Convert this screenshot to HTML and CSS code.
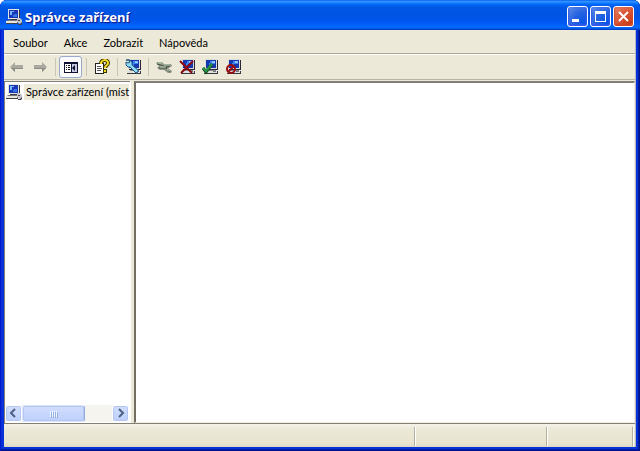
FILE: index.html
```
<!DOCTYPE html>
<html lang="cs">
<head>
<meta charset="utf-8">
<title>Správce zařízení</title>
<link rel="stylesheet" href="styles.css">
</head>
<body>
<svg class="defs" aria-hidden="true">
  <symbol id="computer" viewBox="0 0 16 16">
    <path d="M2 0h11v10H2z" fill="#e6e4de"/><path d="M13 1h1v10H4v-1h9z" fill="#383848"/>
    <path d="M3 1h9v8H3z" fill="#1838b8"/><path d="M4 2h4v1H6v3H4z" fill="#78b4ff"/><path d="M8 5h3v3H7V6h1z" fill="#3474e4"/>
    <path d="M2 11h9l1 1H1z" fill="#74747c"/><path d="M0 12h11v2H0z" fill="#e8e6de"/><path d="M0 14h12v1H0zM11 12h1v2h-1z" fill="#404048"/>
    <path d="M11 9h3l2 2v3l-2 1-3-2z" fill="#c4c6cc"/><path d="M12 15h2l2-2v2l-1 1h-3zM12 11h2v1h-2z" fill="#404050"/>
  </symbol>
  <symbol id="device" viewBox="0 0 16 16">
    <path d="M3 0h12v10H3z" fill="#dcdcd8"/><path d="M15 1h1v10H4v-1h11z" fill="#282838"/>
    <path d="M4 1h10v8H4z" fill="#1438b0"/><path d="M8 2h5v3H9v2H7V4h1z" fill="#3c84f0"/><path d="M10 2h3v2h-3z" fill="#8cc4ff"/>
    <path d="M5 11h9v1H5z" fill="#888"/><path d="M2 12h13v2H2z" fill="#e0e0dc"/><path d="M2 14h14v1H2zM15 12h1v2h-1z" fill="#383840"/><path d="M11 12h3v1h-3z" fill="#747480"/>
  </symbol>
</svg>
<div class="window">
  <header class="titlebar">
    <svg class="icon"><use href="#computer"/></svg>
    <h1>Správce zařízení</h1>
    <div class="captions">
      <button class="caption" aria-label="Minimalizovat"><svg viewBox="0 0 19 19"><path d="M4 12h7v3H4z" fill="#fff"/></svg></button>
      <button class="caption" aria-label="Maximalizovat"><svg viewBox="0 0 19 19"><path d="M4 4h11v11H4zM5 7v7h9V7z" fill="#fff" fill-rule="evenodd"/></svg></button>
      <button class="caption close" aria-label="Zavřít"><svg viewBox="0 0 19 19"><path d="M5 5l9 9M14 5l-9 9" stroke="#fff" stroke-width="2"/></svg></button>
    </div>
  </header>
  <main class="client">
    <nav class="menu"><button>Soubor</button><button>Akce</button><button>Zobrazit</button><button>Nápověda</button></nav>
    <div class="toolbar">
      <button class="tool" aria-label="Zpět"><svg class="icon" viewBox="0 0 16 16"><path d="M1 8l5-5v3h8v4H6v3z" fill="#aaa99f"/><path d="M6 9h8v1H6v3L2 9z" fill="#8e8d85"/></svg></button>
      <button class="tool" aria-label="Vpřed"><svg class="icon" viewBox="0 0 16 16"><path d="M15 8l-5-5v3H2v4h8v3z" fill="#aaa99f"/><path d="M2 9h12l-4 4v-3H2z" fill="#8e8d85"/></svg></button>
      <span class="divider"></span>
      <button class="tool pressed" aria-label="Strom konzoly"><svg class="icon" viewBox="0 0 16 16"><path d="M1 3h14v11H1z" fill="#101030"/><path d="M2 5h6v8H2z" fill="#fff"/><path d="M9 5h5v8H9z" fill="#c8c8e0"/><path d="M3 6h1v1H3zM5 6h2v1H5zM3 8h1v1H3zM5 8h2v1H5zM3 10h1v1H3zM5 10h2v1H5z" fill="#111"/><path d="M12 6v6L9 9z" fill="#101030"/></svg></button>
      <span class="divider"></span>
      <button class="tool" aria-label="Nápověda"><svg class="icon" viewBox="0 0 16 16"><path d="M1 4h9v11H1z" fill="#222"/><path d="M2 5h7v9H2z" fill="#fff"/><path d="M3 7h4v1H3zM3 9h5v1H3zM3 11h4v1H3z" fill="#555"/><path d="M7 5c0-5 7-5 7-1 0 3-3 2-3 5" fill="none" stroke="#3c3600" stroke-width="4"/><path d="M7 5c0-5 7-5 7-1 0 3-3 2-3 5" fill="none" stroke="#f6df20" stroke-width="2"/><path d="M9 10h4v4H9z" fill="#3c3600"/><path d="M10 11h2v2h-2z" fill="#f6df20"/></svg></button>
      <span class="divider"></span>
      <button class="tool" aria-label="Vyhledat změny hardwaru"><svg class="icon" viewBox="0 0 16 16"><use href="#device"/><path d="M1 1h3l1 2-2 1-2-1v3l2 2h2l6 6 2-1v-2L7 6V3L5 1z" fill="#8eddf4" stroke="#1e5080"/></svg></button>
      <span class="divider"></span>
      <button class="tool" aria-label="Aktualizovat ovladač"><svg class="icon" viewBox="0 0 16 16"><path d="M0 4l2-1h4l2 2h7l1 2-3 2h-1l4 3-1 2h-3l-4-3H4L1 9l2-2z" fill="#8c9484"/><path d="M1 5l4 1 1 1h8M3 9h7l4 4M9 9l4-2" fill="none" stroke="#424a42"/><path d="M2 4h4M8 6h6M4 8h6M11 10l3 2" stroke="#bcd2b4"/></svg></button>
      <button class="tool" aria-label="Odinstalovat"><svg class="icon" viewBox="0 0 16 16"><use href="#device"/><path d="M1 2l12 12M14 2L2 14" stroke="#8c0810" stroke-width="2"/></svg></button>
      <button class="tool" aria-label="Povolit"><svg class="icon" viewBox="0 0 16 16"><use href="#device"/><path d="M1 9l3 4 6-8" fill="none" stroke="#164c24" stroke-width="3"/><path d="M1 9l3 3 6-7" fill="none" stroke="#289444" stroke-width="2"/></svg></button>
      <button class="tool" aria-label="Zakázat"><svg class="icon" viewBox="0 0 16 16"><use href="#device"/><circle cx="6" cy="10" r="4" fill="none" stroke="#980c10" stroke-width="2"/><path d="M3 13l6-6" stroke="#980c10" stroke-width="2"/></svg></button>
    </div>
    <div class="panes">
      <section class="tree">
        <div class="node"><svg class="icon"><use href="#computer"/></svg><span class="label">Správce zařízení (míst</span></div>
        <div class="scrollbar">
          <button aria-label="Posunout vlevo"><svg viewBox="0 0 15 15"><path d="M9 3L5 7l4 4" fill="none" stroke="#4d6185" stroke-width="2"/></svg></button>
          <div class="track"><div class="thumb"><i></i><i></i><i></i><i></i></div></div>
          <button aria-label="Posunout vpravo"><svg viewBox="0 0 15 15"><path d="M6 3l4 4-4 4" fill="none" stroke="#4d6185" stroke-width="2"/></svg></button>
        </div>
      </section>
      <section class="details"></section>
    </div>
    <footer class="status"><span></span><span></span><span></span></footer>
  </main>
</div>
</body>
</html>
```
FILE: styles.css
```
* { box-sizing: border-box; }
body { margin: 0; background: #fff; color: #000; font: 11px/14px Lato, "Noto Sans", sans-serif; }
button { margin: 0; padding: 0; border: 0; background: none; color: inherit; font: inherit; }
.defs { position: absolute; width: 0; height: 0; }
.icon { display: block; width: 16px; height: 16px; flex: none; }
.window { display: flex; flex-direction: column; height: 100vh; padding: 0 4px 4px; border-radius: 7px 7px 0 0; background: #0831d9; box-shadow: inset 1px 0 #0019cf, inset -1px 0 #00138c, inset 0 -1px #00138c, inset -2px -2px #001ea0; overflow: hidden; }
.titlebar { display: flex; flex: none; align-items: center; gap: 3px; height: 30px; margin: 0 -4px; padding: 3px 6px 0; background: linear-gradient(#0058ee 0, #3593ff 4%, #288eff 7%, #127dff 10%, #0369fc 14%, #0262ee 18%, #0057e5 25%, #0054e3 50%, #0055eb 66%, #005bf5 78%, #026afe 90%, #0062ef 94%, #0043cf 98%, #0040ab); }
h1 { flex: 1; margin: 0; color: #fff; font: bold 13px/18px "Noto Sans", sans-serif; text-shadow: 1px 1px 1px #0f1089; }
.captions { display: flex; gap: 2px; }
.caption { width: 21px; height: 21px; border: 1px solid #fff; border-radius: 3px; background: radial-gradient(circle at 90% 90%, #0054e9 0, #2663e0 50%, #4479e4 75%, #6d98ee); box-shadow: inset 0 -1px 2px 1px #3458e8; }
.caption svg { display: block; }
.close { background: radial-gradient(circle at 90% 90%, #c93a12 0, #dc5737 55%, #e58a70); box-shadow: inset 0 -1px 2px 1px #cc4628; }
.client { display: flex; flex: 1; flex-direction: column; min-height: 0; border-right: 1px solid #b5b9c4; background: #ece9d8; }
.menu { display: flex; align-items: center; gap: 16px; height: 24px; padding: 3px 9px 0; border-bottom: 1px solid #aca899; }
.toolbar { display: flex; align-items: center; height: 26px; border-top: 1px solid #fff; border-bottom: 1px solid #b8b4a4; }
.tool { display: grid; place-items: center; width: 23px; height: 22px; }
.tool:first-child { margin-left: 1px; }
.pressed { border: 1px solid #98a9cc; border-radius: 3px; background: #fafafa; }
.divider { width: 1px; height: 18px; margin: 0 3px 0 4px; background: #c9c5b4; }
.panes { display: flex; flex: 1; gap: 3px; min-height: 0; padding-top: 1px; }
.tree { display: flex; flex-direction: column; justify-content: space-between; width: 127px; padding: 2px 1px 1px; border: solid #fff; border-width: 0 1px 0 0; box-shadow: inset 1px 1px #817f76; background: #fff; }
.details { flex: 1; border: 2px solid #716f64; border-color: #817f76 #f1efe2 #f1efe2 #716f64; border-width: 2px 1px 1px 2px; background: #fff; }
.node { display: flex; align-items: center; height: 18px; gap: 2px; padding-left: 1px; white-space: nowrap; }
.label { flex: 1; height: 16px; padding: 1px 0 1px 2px; background: #ece9d8; }
.scrollbar { display: flex; height: 17px; background: #f5f4ef; }
.scrollbar button, .thumb { width: 17px; height: 17px; border: 1px solid #fff; border-radius: 3px; background: linear-gradient(#d2defd, #bdd0fc); box-shadow: inset 0 0 0 1px #b3c6f2; }
.scrollbar svg { display: block; }
.track { flex: 1; }
.thumb { display: flex; align-items: center; justify-content: center; gap: 1px; width: 70%; border-color: #dbe5fd; border-right-color: #94add8; }
.thumb i { width: 1px; height: 6px; background: #f4f8ff; box-shadow: 1px 1px #94aee8; }
.status { display: grid; grid-template-columns: 412px 1fr 86px; height: 24px; padding: 3px 1px 1px 0; border-top: 1px solid #817f76; background: linear-gradient(#f5f3e9, #ece9d8 5px, #e8e4d0 19px, #ddd8c4); }
.status span { border-right: 1px solid #fff; box-shadow: inset -1px 0 #b4b09f; }
```
